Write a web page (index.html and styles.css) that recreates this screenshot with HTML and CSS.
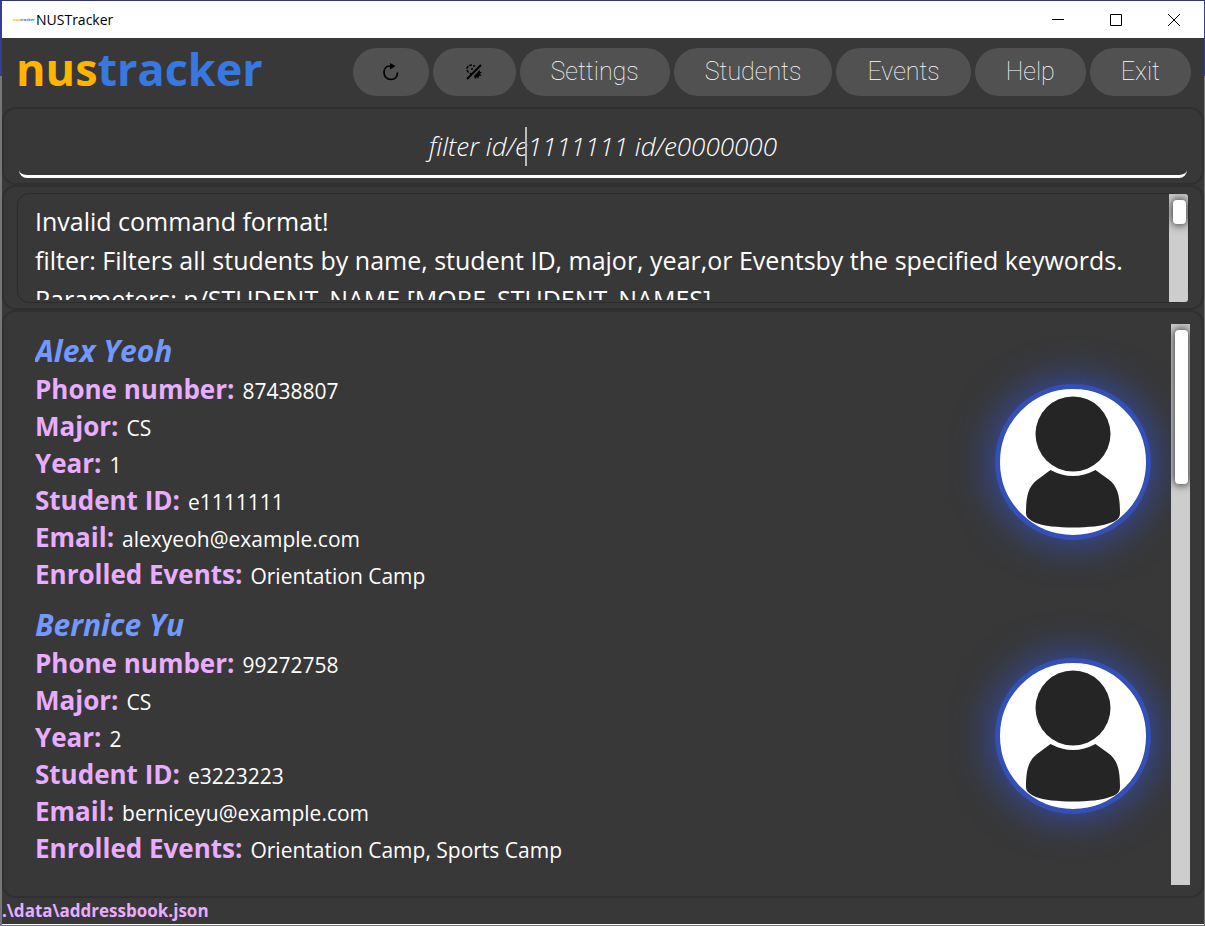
FILE: index.html
```html
<!DOCTYPE html>
<html lang="en">
<head>
<meta charset="utf-8">
<title>NUSTracker</title>
<link rel="stylesheet" href="styles.css">
</head>
<body>
<svg class="defs" width="0" height="0" aria-hidden="true">
  <symbol id="person" viewBox="0 0 146 146">
    <circle cx="73" cy="45" r="37.5"/>
    <path d="M50.500 81 Q73 93 95.500 81 L108 90 C118 97 120 108 120 124 C120 130 116 132 110 134 C96 140 50 140 36 134 C30 131 26 129 26 124 C26 108 28 98 37 91 Z"/>
  </symbol>
</svg>
<div class="window">
  <header class="titlebar">
    <span class="mini-logo" aria-hidden="true"><span class="gold">nus</span><span class="blue">tracker</span></span>
    <span class="title">NUSTracker</span>
    <div class="controls">
      <button type="button" aria-label="Minimize"><svg width="12" height="12" viewBox="0 0 12 12"><path d="M0 5.500H12"/></svg></button>
      <button type="button" aria-label="Maximize"><svg width="12" height="12" viewBox="0 0 12 12"><path d="M.5.5H11.500V11.500H.5Z"/></svg></button>
      <button type="button" aria-label="Close"><svg width="12" height="12" viewBox="0 0 12 12"><path d="M0 0L12 12M12 0L0 12"/></svg></button>
    </div>
  </header>
  <div class="topbar">
    <div class="logo"><span class="gold">nus</span><span class="blue">tracker</span></div>
    <nav class="menu">
      <button type="button" class="pill icon" aria-label="Refresh"><svg width="18" height="20" viewBox="0 0 18 20"><path d="M8 4C4 4 2 7 2 10.500C2 14.500 5 17.500 9 17.500C13 17.500 15.500 14.500 15.500 10.500" fill="none" stroke="#000" stroke-width="1.700"/><path d="M8 1L13.500 4L8 7.500Z"/></svg></button>
      <button type="button" class="pill icon wide" aria-label="Toggle theme"><svg width="16" height="16" viewBox="0 0 16 16"><path d="M1 15L15 1" stroke="#000" stroke-width="2"/><path d="M6 1C2 1 1 3 1 5C1 7 2 8 3 8.500" fill="none" stroke="#000" stroke-width="1.500" stroke-dasharray="3 1"/><path d="M5 5H7M8 1V3M4 10L5 9" stroke="#000" stroke-width="1.500"/><path d="M13.500 6L8 12L9 15L11 13L12 15L13 12L15.500 12L14 10L16 8H14Z"/></svg></button>
      <button type="button" class="pill">Settings</button>
      <button type="button" class="pill">Students</button>
      <button type="button" class="pill">Events</button>
      <button type="button" class="pill">Help</button>
      <button type="button" class="pill">Exit</button>
    </nav>
  </div>
  <section class="panel command">
    <input type="text" class="command-input" aria-label="Command" value="filter id/e1111111 id/e0000000">
    <span class="caret"></span>
  </section>
  <section class="panel result">
    <div class="result-box">
      <div class="result-text">Invalid command format!<br>filter: Filters all students by name, student ID, major, year,or Eventsby the specified keywords.<br>Parameters: n/STUDENT_NAME [MORE_STUDENT_NAMES]</div>
      <div class="scroll"><div class="thumb short"></div></div>
    </div>
  </section>
  <main class="panel list">
    <div class="cards">
      <article class="card">
        <div class="info">
          <h2>Alex Yeoh</h2>
          <p><b>Phone number:</b><span>87438807</span></p>
          <p><b>Major:</b><span>CS</span></p>
          <p><b>Year:</b><span>1</span></p>
          <p><b>Student ID:</b><span>e1111111</span></p>
          <p><b>Email:</b><span>alexyeoh@example.com</span></p>
          <p><b>Enrolled Events:</b><span>Orientation Camp</span></p>
        </div>
        <svg class="avatar" role="img" aria-label="Alex Yeoh"><use href="#person"/></svg>
      </article>
      <article class="card">
        <div class="info">
          <h2>Bernice Yu</h2>
          <p><b>Phone number:</b><span>99272758</span></p>
          <p><b>Major:</b><span>CS</span></p>
          <p><b>Year:</b><span>2</span></p>
          <p><b>Student ID:</b><span>e3223223</span></p>
          <p><b>Email:</b><span>berniceyu@example.com</span></p>
          <p><b>Enrolled Events:</b><span>Orientation Camp, Sports Camp</span></p>
        </div>
        <svg class="avatar" role="img" aria-label="Bernice Yu"><use href="#person"/></svg>
      </article>
    </div>
    <div class="scroll"><div class="thumb tall"></div></div>
  </main>
  <footer class="status">.\data\addressbook.json</footer>
</div>
</body>
</html>
```

FILE: styles.css
```css
* { box-sizing: border-box; }
body {
  margin: 0;
  height: 100vh;
  padding: 1px 1px 1px 2px;
  background: linear-gradient(#2f3578 0 1px, #343f92 1px 76px, #777 76px);
  font-family: "Open Sans", "Noto Sans", sans-serif;
  color: #fff;
  overflow: hidden;
}
.defs { position: absolute; }
button { border: 0; padding: 0; font: inherit; color: inherit; }
.window {
  display: flex;
  flex-direction: column;
  height: 100%;
  background: #383838;
  border-bottom: 1px solid #fff;
}
.gold { color: #ffb400; }
.blue { color: #3779e1; }

.titlebar {
  display: flex;
  align-items: center;
  flex: 0 0 37px;
  padding: 0 1px 0 11px;
  background: #fff;
  color: #000;
}
.mini-logo { width: 23px; font-size: 4px; font-weight: 700; line-height: 16px; }
.title { font-size: 14px; }
.controls { display: flex; margin-left: auto; height: 100%; }
.controls button {
  display: grid;
  place-items: center;
  width: 58px;
  background: none;
}
.controls path { fill: none; stroke: #000; stroke-width: 1; }

.topbar {
  display: flex;
  justify-content: space-between;
  flex: 0 0 69px;
  padding: 10px 13px 0 14px;
}
.logo { font-size: 45px; font-weight: 700; line-height: 42px; }
.menu { display: flex; align-items: flex-start; gap: 4px; }
.pill {
  height: 48px;
  padding: 0 31px;
  border-radius: 24px;
  background: #515151;
  font: 100 25px/48px Roboto, sans-serif;
}
.pill.icon { display: grid; place-items: center; width: 76px; padding: 0; }
.pill.icon.wide { width: 83px; }

.panel {
  border: 2px solid #303030;
  border-radius: 14px;
}
.command { position: relative; flex: 0 0 78px; padding: 7px 15px 0; }
.command-input {
  display: block;
  width: 100%;
  height: 62px;
  padding: 0;
  border: 0 solid #fff;
  border-bottom-width: 3px;
  border-radius: 8px;
  outline: 0;
  background: none;
  color: #fff;
  text-align: center;
  font: italic 300 26px/36px "Open Sans", sans-serif;
}
.caret {
  position: absolute;
  left: calc(50% - 78px);
  top: 18px;
  width: 2px;
  height: 39px;
  background: #bbb;
}
.result { flex: 0 0 125px; padding: 6px 13px 0; }
.result-box {
  display: flex;
  height: 110px;
  border: 1px solid #2c2c2c;
  border-radius: 12px;
}
.result-text {
  flex: 1;
  height: 106px;
  padding: 8px 0 0 17px;
  overflow: hidden;
  white-space: nowrap;
  font-size: 25px;
  line-height: 39px;
}
.scroll {
  flex: 0 0 19px;
  padding: 6px 2px 0 4px;
  background: #cdcdcd;
  overflow: hidden;
}
.result .scroll { border-radius: 0 3px 3px 0; }
.thumb {
  border-radius: 4px;
  background: #fff;
  box-shadow: 0 0 8px 1px #333;
}
.short { height: 24px; }
.tall { height: 154px; }

.list { display: flex; flex: 1; min-height: 0; padding: 12px 12px 11px 31px; }
.cards { flex: 1; min-width: 0; overflow: hidden; }
.card {
  display: flex;
  align-items: center;
  justify-content: space-between;
  padding: 7px 20px 5px 0;
}
.card h2 {
  margin: 0;
  font-size: 30px;
  line-height: 40px;
  font-style: italic;
  color: #7399ff;
}
.card p {
  display: flex;
  align-items: baseline;
  gap: 8px;
  height: 37px;
  margin: 0;
  line-height: 37px;
}
.card b { font-size: 26px; color: #e8adff; }
.card span { font-size: 21px; }
.avatar {
  flex: none;
  width: 156px;
  height: 156px;
  border: 5px solid #344fb5;
  border-radius: 50%;
  background: #fff;
  fill: #252525;
  box-shadow: 0 0 42px 1px #344fb5;
}
.status {
  flex: 0 0 25px;
  font-size: 17px;
  line-height: 26px;
  font-weight: 700;
  color: #e8adff;
}
```
